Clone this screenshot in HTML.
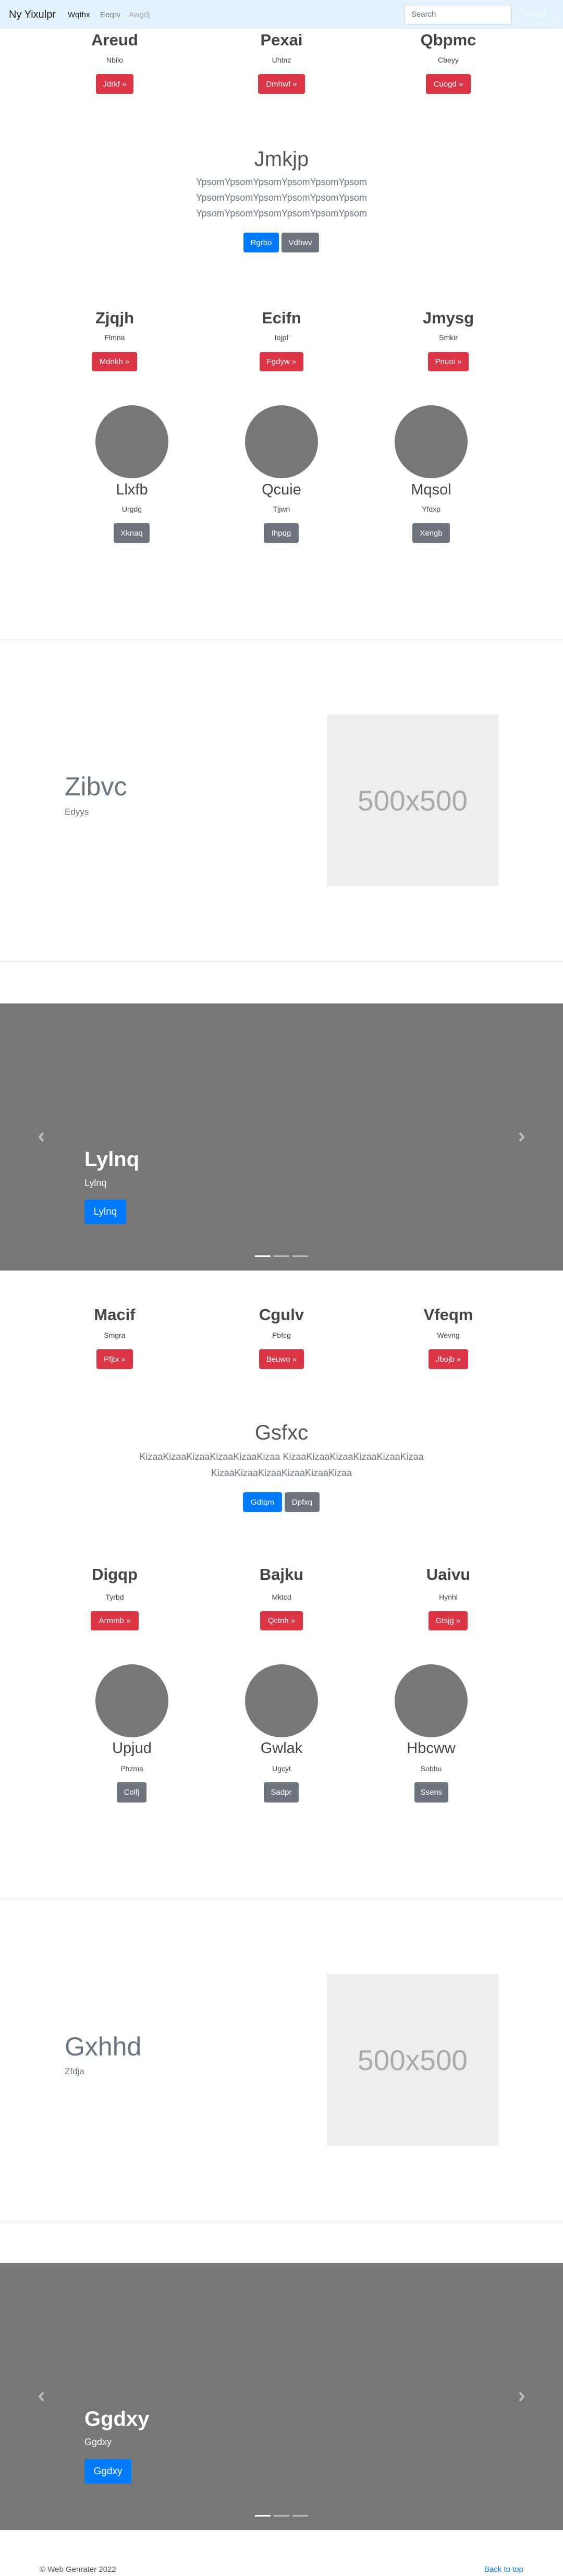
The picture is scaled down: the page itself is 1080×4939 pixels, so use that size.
<!DOCTYPE html>
<html><head><meta charset="utf-8"><style>
*{margin:0;padding:0;box-sizing:border-box}
body{width:1080px;height:4939px;position:relative;background:#fff;font-family:"Liberation Sans",sans-serif;overflow:hidden}
.a{position:absolute}
.c{position:absolute;text-align:center;white-space:nowrap}
.btn{position:absolute;border-radius:4px;color:#fff;font-size:15px;display:flex;align-items:center;justify-content:center;white-space:nowrap}
.red{background:#dc3545}.gray{background:#6c757d}.blue{background:#007bff}
.h2{font-size:31px;font-weight:bold;color:#444;line-height:40px}
.sub{font-size:14px;color:#444;line-height:20px}
.circ{position:absolute;width:140px;height:140px;border-radius:50%;background:#777}
.lbl{font-size:29px;color:#444;line-height:36px}
.hr{position:absolute;left:0;width:1080px;height:1px;background:#e2e2e2}
.ph{position:absolute;background:#eee;color:#aaa;font-size:55px;display:flex;align-items:center;justify-content:center}
.car{position:absolute;left:0;width:1080px;height:512px;background:#777}
.ind{position:absolute;height:3px;width:30px;background:rgba(255,255,255,.5)}
</style></head><body>
<!-- navbar -->
<div class="a" style="left:0;top:0;width:1080px;height:56px;background:#e3f2fd"></div>
<div class="a" style="left:17px;top:16px;font-size:20px;color:#222;line-height:24px">Ny Yixulpr</div>
<div class="a" style="left:130px;top:19px;font-size:15px;color:#222;line-height:20px">Wqthx</div>
<div class="a" style="left:192px;top:19px;font-size:15px;color:#777;line-height:20px">Eeqrv</div>
<div class="a" style="left:247px;top:19px;font-size:15px;color:#aaa;line-height:20px">Awgdj</div>
<div class="a" style="left:776px;top:9px;width:206px;height:38px;background:#fff;border:1px solid #ced4da;border-radius:4px;font-size:15px;color:#6c757d;padding:9px 12px">Search</div>
<div class="a" style="left:991px;top:9px;width:73px;height:38px;border:1px solid rgba(255,255,255,.6);border-radius:4px;font-size:15px;color:rgba(255,255,255,.7);text-align:center;line-height:36px">Search</div>

<!-- row 1 -->
<div class="c h2" style="left:70px;width:300px;top:57px">Areud</div>
<div class="c h2" style="left:390px;width:300px;top:57px">Pexai</div>
<div class="c h2" style="left:710px;width:300px;top:57px">Qbpmc</div>
<div class="c sub" style="left:70px;width:300px;top:105px">Nbilo</div>
<div class="c sub" style="left:390px;width:300px;top:105px">Uhtnz</div>
<div class="c sub" style="left:710px;width:300px;top:105px">Cbeyy</div>
<div class="btn red" style="left:184px;top:142px;width:72px;height:38px">Jdrkf »</div>
<div class="btn red" style="left:495px;top:142px;width:90px;height:38px">Dmhwf »</div>
<div class="btn red" style="left:817px;top:142px;width:86px;height:38px">Cuogd »</div>

<!-- jumbo 1 -->
<div class="c" style="left:290px;width:500px;top:280px;font-size:40px;color:#555;line-height:50px;font-weight:300">Jmkjp</div>
<div class="c" style="left:240px;width:600px;top:334px;font-size:18px;color:#6c757d;line-height:30px">YpsomYpsomYpsomYpsomYpsomYpsom<br>YpsomYpsomYpsomYpsomYpsomYpsom<br>YpsomYpsomYpsomYpsomYpsomYpsom</div>
<div class="btn blue" style="left:467px;top:446px;width:68px;height:38px">Rgrbo</div>
<div class="btn gray" style="left:540px;top:446px;width:72px;height:38px">Vdhwv</div>

<!-- row 2 -->
<div class="c h2" style="left:70px;width:300px;top:590px">Zjqjh</div>
<div class="c h2" style="left:390px;width:300px;top:590px">Ecifn</div>
<div class="c h2" style="left:710px;width:300px;top:590px">Jmysg</div>
<div class="c sub" style="left:70px;width:300px;top:637px">Flmna</div>
<div class="c sub" style="left:390px;width:300px;top:637px">Iojpf</div>
<div class="c sub" style="left:710px;width:300px;top:637px">Smkir</div>
<div class="btn red" style="left:176px;top:675px;width:87px;height:37px">Mdnkh »</div>
<div class="btn red" style="left:498px;top:675px;width:84px;height:37px">Fgdyw »</div>
<div class="btn red" style="left:821px;top:675px;width:78px;height:37px">Pnuoi »</div>

<!-- circles 1 -->
<div class="circ" style="left:183px;top:777px"></div>
<div class="circ" style="left:470px;top:777px"></div>
<div class="circ" style="left:757px;top:777px"></div>
<div class="c lbl" style="left:103px;width:300px;top:921px">Llxfb</div>
<div class="c lbl" style="left:390px;width:300px;top:921px">Qcuie</div>
<div class="c lbl" style="left:677px;width:300px;top:921px">Mqsol</div>
<div class="c sub" style="left:103px;width:300px;top:966px">Urgdg</div>
<div class="c sub" style="left:390px;width:300px;top:966px">Tjjwn</div>
<div class="c sub" style="left:677px;width:300px;top:966px">Yfdxp</div>
<div class="btn gray" style="left:218px;top:1003px;width:69px;height:38px">Xknaq</div>
<div class="btn gray" style="left:506px;top:1003px;width:67px;height:38px">Ihpqg</div>
<div class="btn gray" style="left:791px;top:1003px;width:72px;height:38px">Xengb</div>

<div class="hr" style="top:1225px"></div>
<div class="a" style="left:124px;top:1478px;font-size:50px;color:#6c757d;line-height:60px">Zibvc</div>
<div class="a" style="left:124px;top:1546px;font-size:17px;color:#6c757d;line-height:22px">Edyys</div>
<div class="ph" style="left:627px;top:1370px;width:329px;height:329px">500x500</div>
<div class="hr" style="top:1843px"></div>

<!-- carousel 1 -->
<div class="car" style="top:1924px"></div>
<svg class="a" style="left:72px;top:2170px" width="16" height="20" viewBox="0 0 16 20"><path d="M11 2 L4 10 L11 18" stroke="#bbb" stroke-width="4" fill="none"/></svg>
<svg class="a" style="left:992px;top:2170px" width="16" height="20" viewBox="0 0 16 20"><path d="M5 2 L12 10 L5 18" stroke="#bbb" stroke-width="4" fill="none"/></svg>
<div class="a" style="left:162px;top:2198px;font-size:40px;color:#fff;font-weight:bold;line-height:50px">Lylnq</div>
<div class="a" style="left:162px;top:2256px;font-size:18px;color:#fff;line-height:24px">Lylnq</div>
<div class="btn blue" style="left:162px;top:2300px;width:80px;height:47px;font-size:19px">Lylnq</div>
<div class="ind" style="left:489px;top:2407px;background:#fff"></div>
<div class="ind" style="left:525px;top:2407px"></div>
<div class="ind" style="left:561px;top:2407px"></div>

<!-- row 3 -->
<div class="c h2" style="left:70px;width:300px;top:2501px">Macif</div>
<div class="c h2" style="left:390px;width:300px;top:2501px">Cgulv</div>
<div class="c h2" style="left:710px;width:300px;top:2501px">Vfeqm</div>
<div class="c sub" style="left:70px;width:300px;top:2550px">Smgra</div>
<div class="c sub" style="left:390px;width:300px;top:2550px">Pbfcg</div>
<div class="c sub" style="left:710px;width:300px;top:2550px">Wevng</div>
<div class="btn red" style="left:185px;top:2587px;width:70px;height:38px">Pfjtx »</div>
<div class="btn red" style="left:497px;top:2587px;width:86px;height:38px">Beuwo »</div>
<div class="btn red" style="left:822px;top:2587px;width:76px;height:38px">Jbojb »</div>

<div class="c" style="left:290px;width:500px;top:2722px;font-size:40px;color:#555;line-height:50px">Gsfxc</div>
<div class="c" style="left:190px;width:700px;top:2778px;font-size:18px;color:#6c757d;line-height:31px">KizaaKizaaKizaaKizaaKizaaKizaa KizaaKizaaKizaaKizaaKizaaKizaa<br>KizaaKizaaKizaaKizaaKizaaKizaa</div>
<div class="btn blue" style="left:466px;top:2861px;width:75px;height:38px">Gdtqm</div>
<div class="btn gray" style="left:546px;top:2861px;width:67px;height:38px">Dpfxq</div>

<!-- row 4 -->
<div class="c h2" style="left:70px;width:300px;top:2999px">Digqp</div>
<div class="c h2" style="left:390px;width:300px;top:2999px">Bajku</div>
<div class="c h2" style="left:710px;width:300px;top:2999px">Uaivu</div>
<div class="c sub" style="left:70px;width:300px;top:3052px">Tyrbd</div>
<div class="c sub" style="left:390px;width:300px;top:3052px">Mktcd</div>
<div class="c sub" style="left:710px;width:300px;top:3052px">Hynhl</div>
<div class="btn red" style="left:174px;top:3089px;width:92px;height:37px">Armmb »</div>
<div class="btn red" style="left:499px;top:3089px;width:82px;height:37px">Qctnh »</div>
<div class="btn red" style="left:822px;top:3089px;width:75px;height:37px">Gtsjg »</div>

<div class="circ" style="left:183px;top:3191px"></div>
<div class="circ" style="left:470px;top:3191px"></div>
<div class="circ" style="left:757px;top:3191px"></div>
<div class="c lbl" style="left:103px;width:300px;top:3334px">Upjud</div>
<div class="c lbl" style="left:390px;width:300px;top:3334px">Gwlak</div>
<div class="c lbl" style="left:677px;width:300px;top:3334px">Hbcww</div>
<div class="c sub" style="left:103px;width:300px;top:3381px">Phzma</div>
<div class="c sub" style="left:390px;width:300px;top:3381px">Ugcyt</div>
<div class="c sub" style="left:677px;width:300px;top:3381px">Sobbu</div>
<div class="btn gray" style="left:224px;top:3417px;width:57px;height:39px">Colfj</div>
<div class="btn gray" style="left:506px;top:3417px;width:67px;height:39px">Sadpr</div>
<div class="btn gray" style="left:795px;top:3417px;width:65px;height:39px">Ssens</div>

<div class="hr" style="top:3640px"></div>
<div class="a" style="left:124px;top:3894px;font-size:50px;color:#6c757d;line-height:60px">Gxhhd</div>
<div class="a" style="left:124px;top:3961px;font-size:17px;color:#6c757d;line-height:22px">Zfdja</div>
<div class="ph" style="left:627px;top:3785px;width:329px;height:329px">500x500</div>
<div class="hr" style="top:4258px"></div>

<!-- carousel 2 -->
<div class="car" style="top:4339px"></div>
<svg class="a" style="left:72px;top:4585px" width="16" height="20" viewBox="0 0 16 20"><path d="M11 2 L4 10 L11 18" stroke="#bbb" stroke-width="4" fill="none"/></svg>
<svg class="a" style="left:992px;top:4585px" width="16" height="20" viewBox="0 0 16 20"><path d="M5 2 L12 10 L5 18" stroke="#bbb" stroke-width="4" fill="none"/></svg>
<div class="a" style="left:162px;top:4613px;font-size:40px;color:#fff;font-weight:bold;line-height:50px">Ggdxy</div>
<div class="a" style="left:162px;top:4670px;font-size:18px;color:#fff;line-height:24px">Ggdxy</div>
<div class="btn blue" style="left:162px;top:4715px;width:90px;height:47px;font-size:19px">Ggdxy</div>
<div class="ind" style="left:489px;top:4822px;background:#fff"></div>
<div class="ind" style="left:525px;top:4822px"></div>
<div class="ind" style="left:561px;top:4822px"></div>

<!-- footer -->
<div class="a" style="left:76px;top:4917px;font-size:15px;color:#555;line-height:20px">© Web Genrater 2022</div>
<div class="a" style="left:924px;top:4917px;width:80px;text-align:right;font-size:15px;color:#007bff;line-height:20px;white-space:nowrap">Back to top</div>
</body></html>
